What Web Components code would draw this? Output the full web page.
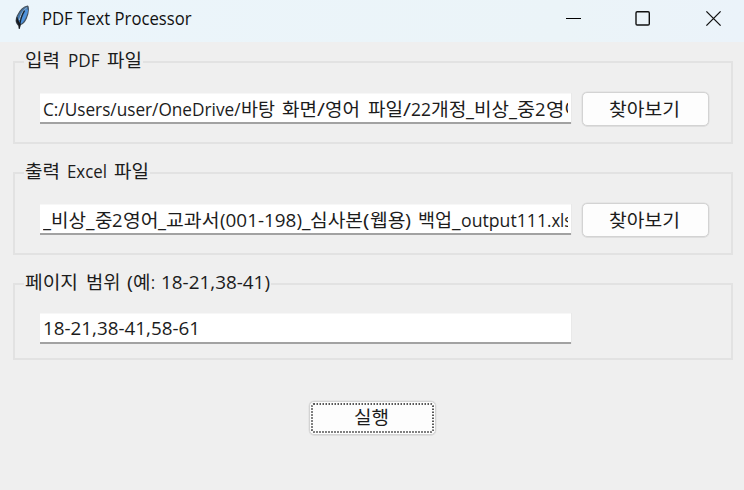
<!DOCTYPE html>
<html lang="ko">
<head>
<meta charset="utf-8">
<title>PDF Text Processor</title>
<style>
html,body{margin:0;height:100%;overflow:hidden;background:#efefef}
body{font-family:"Open Sans","Noto Sans CJK KR",sans-serif;font-size:18.5px;color:#1c1c1c}
</style>
</head>
<body>
<app-window></app-window>
<script>
const define = (name, html, ready) => customElements.define(name, class extends HTMLElement {
  connectedCallback() {
    if (this.shadowRoot) return;
    const t = document.createElement('template');
    t.innerHTML = html;
    this.attachShadow({mode: 'open'}).append(t.content.cloneNode(true));
    if (ready) ready(this);
  }
});

/* A run of text set to an exact advance width. */
define('text-run', `<style>
:host{display:inline-block;white-space:pre;vertical-align:baseline}
span{display:inline-block;transform-origin:0 50%}
</style><span></span>`, el => {
  const s = el.shadowRoot.querySelector('span');
  s.textContent = el.getAttribute('t');
  const w = parseFloat(el.getAttribute('w'));
  const n = s.getBoundingClientRect().width;
  el.style.width = w + 'px';
  s.style.transform = `scaleX(${w / n})`;
});

/* text-line content="text|width;text|width" */
define('text-line', `<style>
:host{display:flex;white-space:nowrap;line-height:26px;align-items:baseline}
text-run{flex:none}
</style>`, el => {
  for (const part of el.getAttribute('content').split(';')) {
    const [t, w] = part.split('|');
    const r = document.createElement('text-run');
    r.setAttribute('t', t);
    r.setAttribute('w', w);
    el.shadowRoot.append(r);
  }
});

/* Puts a text-line made from one of the host's attributes into its .text box. */
const fillText = attr => el => {
  const l = document.createElement('text-line');
  l.setAttribute('content', el.getAttribute(attr));
  el.shadowRoot.querySelector('.text').append(l);
};

define('title-bar', `<style>
:host{display:flex;box-sizing:border-box;height:42px;background:linear-gradient(90deg,#ebf5fb,#ebf4f8 75%,#ebf3fa);align-items:flex-start;color:#111;font-size:18px}
.feather{flex:none;margin:5px 0 0 14px}
text-line{margin:5px 0 0 11px;flex:1}
.ctl{flex:none;margin-top:10px;width:17px;height:17px}
.ctl+.ctl{margin-left:53px}
.ctl:last-child{margin-right:22px}
</style>
<svg class="feather" width="17" height="26" viewBox="0 0 17 26">
<path d="M13.6 1.2C10 1.6 6 5.3 3.3 11C1.8 14.5 1.9 18.2 4.2 20C7.2 19.8 10.5 17.4 12.2 13.5C13.7 10 14.9 5 14 1.6Z" fill="#4277ad" stroke="#46535f" stroke-width="1.2"/>
<path d="M12.8 2.8C9.6 4.7 7 8.8 5.4 15" fill="none" stroke="#a9bccb" stroke-width="1"/>
<path d="M12.7 4.5C12 9.3 9.5 14 6.5 17.5" fill="none" stroke="#4f93dc" stroke-width="3"/>
<path d="M10.5 5.6C8 9.6 6.1 15 5.3 23.6" fill="none" stroke="#15212c" stroke-width="1.2"/>
<path d="M3.1 12.3L2.6 16.2L4.6 20.2L5.3 23.5L6.4 19.4" fill="#16191d" stroke="#16191d" stroke-width=".8"/>
</svg>
<text-line content="PDF Text Processor|149.5"></text-line>
<svg class="ctl" viewBox="0 0 17 17"><path d="M1 8.5H16" stroke="#000" stroke-width="1"/></svg>
<svg class="ctl" viewBox="0 0 17 17"><rect x="1" y="1.7" width="13.3" height="13.3" rx="1.2" fill="none" stroke="#111" stroke-width="1.4"/></svg>
<svg class="ctl" viewBox="0 0 17 17"><path d="M1.4 1.4L15.6 15.6M15.6 1.4L1.4 15.6" stroke="#111" stroke-width="1.3"/></svg>`);

define('group-box', `<style>
:host{display:block;box-sizing:border-box;border:2px solid #e2e2e2}
.text{width:max-content;margin:-16px 0 0 9px;padding:0 1px;background:#efefef;height:26px}
.row{display:flex;align-items:flex-start;padding:19px 0 0 25px;gap:11px}
</style><div class="text"></div><div class="row"><slot></slot></div>`, fillText('legend'));

define('entry-field', `<style>
:host{display:block;box-sizing:border-box;width:531px;height:31px;margin-top:1px;background:#fff;border-bottom:2px solid #a2a2a2;border-top:1px solid #f7f7f7;padding:1px 3px 0 3px;box-shadow:1px 0 #e9e9e9}
.text{overflow:hidden;height:27px}
</style><div class="text"></div>`, fillText('value'));

define('push-button', `<style>
:host{display:flex;box-sizing:border-box;width:127px;height:34px;background:#fdfdfd;border:1px solid #d3d3d3;border-radius:5px;box-shadow:0 0 0 .5px #dedede,0 .5px #cfcfcf;justify-content:center;padding:3px 3px 0 0;position:relative}
:host([focused]){padding-top:2px}
svg{position:absolute;inset:1px;width:123px;height:30px}
:host(:not([focused])) svg{display:none}
</style><div class="text"></div><svg viewBox="0 0 123 30"><rect x="1" y="1" width="121" height="28" rx="1.5" fill="none" stroke="#222" stroke-width="1.5" stroke-dasharray="1.5 1.5"/></svg>`, fillText('label'));

define('app-window', `<style>
:host{display:block;width:744px;height:490px;background:#efefef}
main{display:flex;flex-direction:column;padding:19px 11px 0 13px}
.tall{height:83px;margin-bottom:28px}
.tall entry-field{padding-top:2px}
.short{height:77px}
.short entry-field{margin-top:-1px}
.run{margin:41px 0 0 296px}
</style>
<title-bar></title-bar>
<main>
<group-box class="tall" legend="입력|35; |8;PDF|31.5; |7.5;파일|35">
<entry-field value="C:/Users/user/OneDrive/|197.5;바탕|34; |7.5;화면|35;/|8;영어|35; |7.5;파일|35;/|8;22|20;개정|35.5;_|8;비상|35;_|8;중|18;2|10.5;영어|37"></entry-field>
<push-button label="찾아보기|71"></push-button>
</group-box>
<group-box class="tall" legend="출력|35; |7;Excel|40; |7;파일|35">
<entry-field value="_|8;비상|35;_|8.5;중|17.5;2|10.5;영어|35.5;_|8;교과서|53.5;(001-198)|82;_|8.5;심사본|53;(|6.5;웹용|35.5;)|6; |7;백업|34;_|8.5;output111|86;.xlsx|34"></entry-field>
<push-button label="찾아보기|71"></push-button>
</group-box>
<group-box class="short" legend="페이지|53; |7.5;범위|34.5; |7;(|6;예|17.5;:|4; |6.5;18-21,38-41)|109">
<entry-field value="18-21,38-41,58-61|157"></entry-field>
</group-box>
<push-button class="run" focused label="실행|35"></push-button>
</main>`);
</script>
</body>
</html>
